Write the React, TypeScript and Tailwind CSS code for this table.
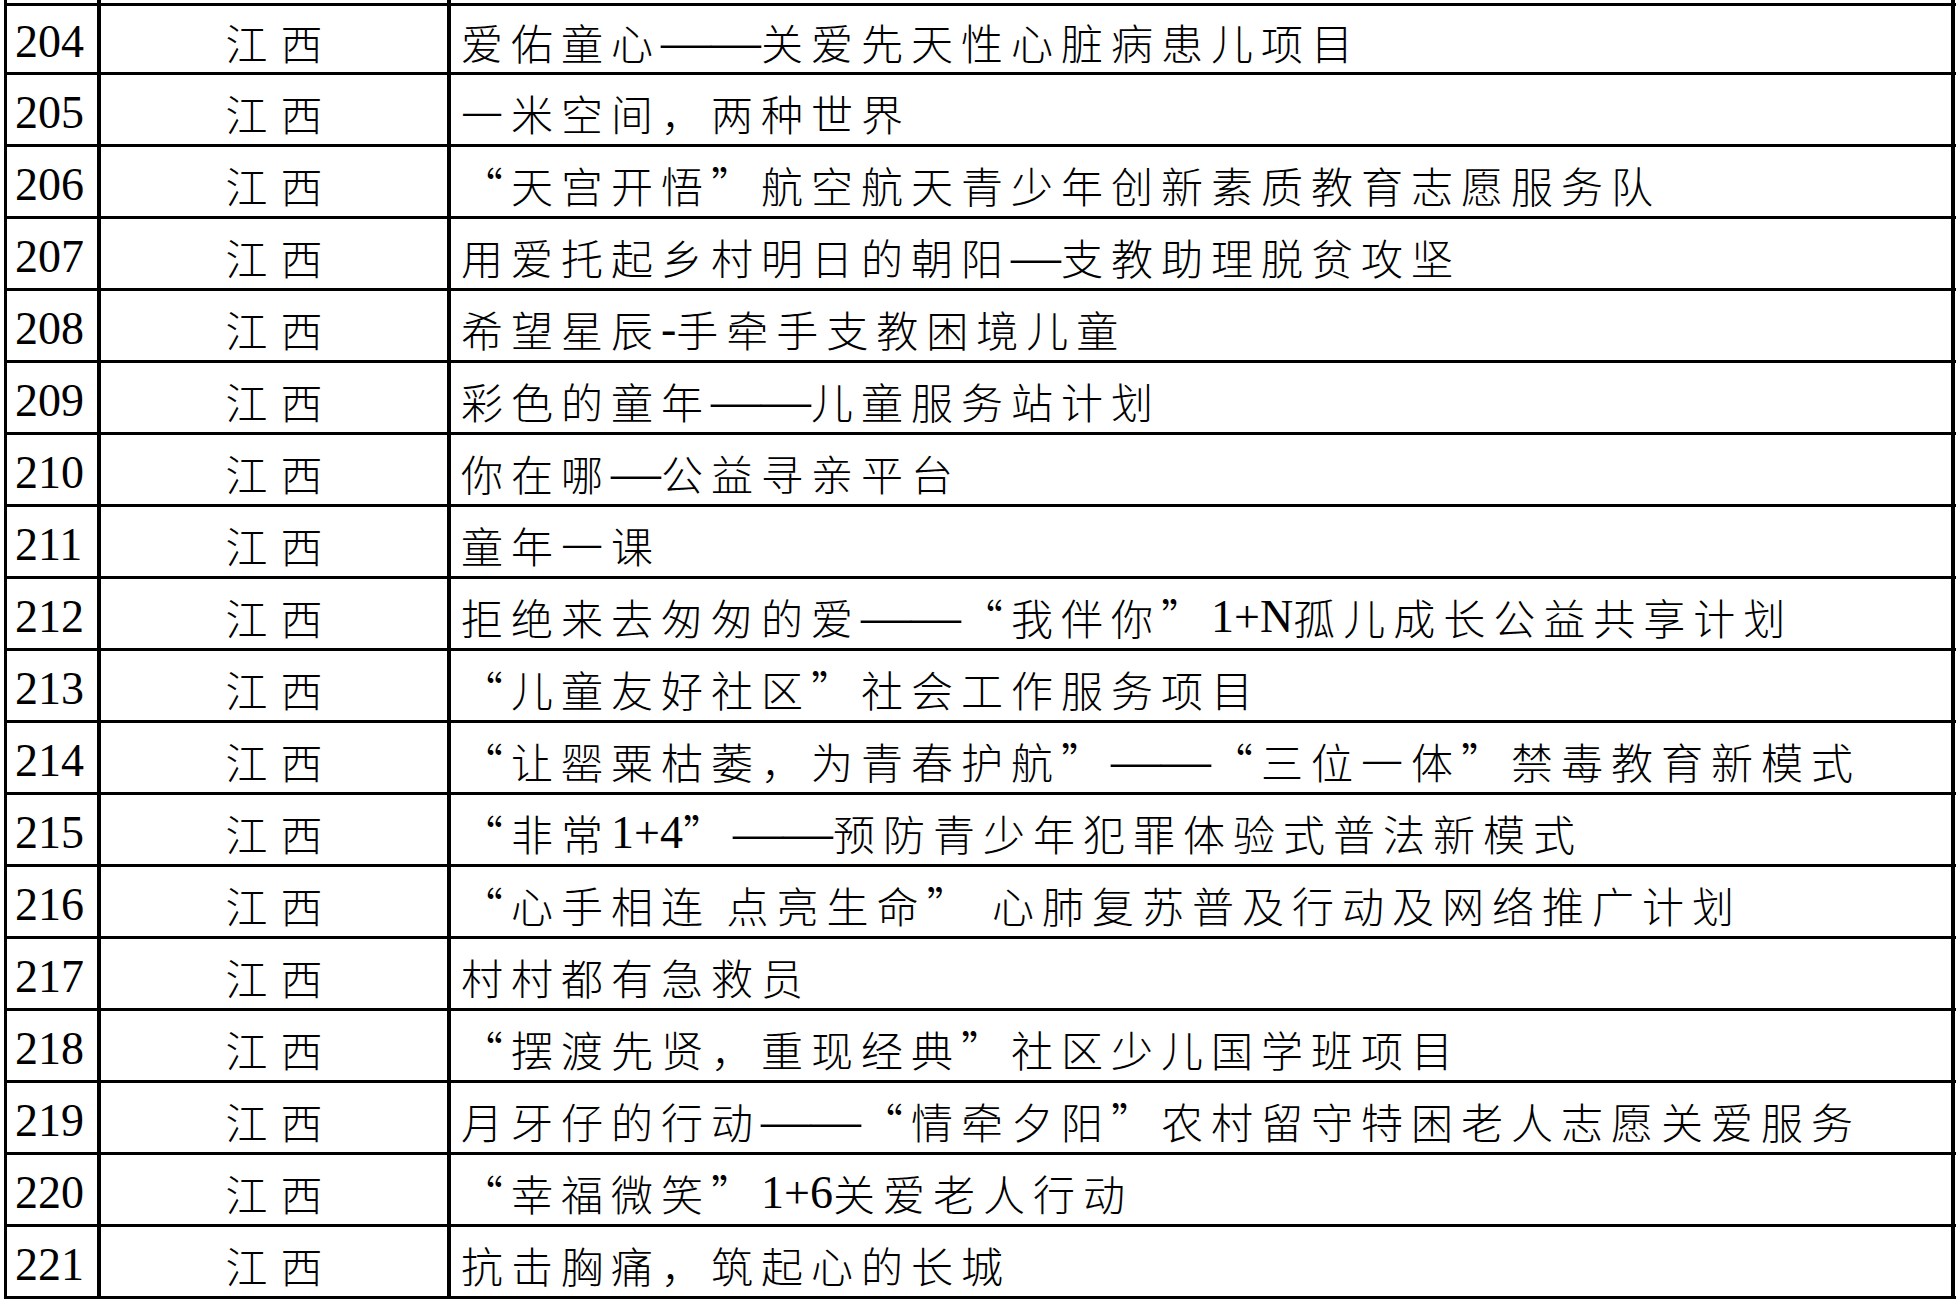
const ROWS: [number, string][] = [
  [204, '爱佑童心——关爱先天性心脏病患儿项目'],
  [205, '一米空间，两种世界'],
  [206, '“天宫开悟”航空航天青少年创新素质教育志愿服务队'],
  [207, '用爱托起乡村明日的朝阳—支教助理脱贫攻坚'],
  [208, '希望星辰-手牵手支教困境儿童'],
  [209, '彩色的童年——儿童服务站计划'],
  [210, '你在哪—公益寻亲平台'],
  [211, '童年一课'],
  [212, '拒绝来去匆匆的爱——“我伴你”1+N孤儿成长公益共享计划'],
  [213, '“儿童友好社区”社会工作服务项目'],
  [214, '“让罂粟枯萎，为青春护航”——“三位一体”禁毒教育新模式'],
  [215, '“非常1+4”——预防青少年犯罪体验式普法新模式'],
  [216, '“心手相连 点亮生命” 心肺复苏普及行动及网络推广计划'],
  [217, '村村都有急救员'],
  [218, '“摆渡先贤，重现经典”社区少儿国学班项目'],
  [219, '月牙仔的行动——“情牵夕阳”农村留守特困老人志愿关爱服务'],
  [220, '“幸福微笑”1+6关爱老人行动'],
  [221, '抗击胸痛，筑起心的长城'],
];

// latin runs and dashes are set in the serif face, the rest in the CJK face
function Mixed({ text }: { text: string }) {
  const parts = text.split(/( +|[\x21-\x7e]+|—+)/).filter((p) => p !== '');
  return (
    <>
      {parts.map((p, i) => {
        if (/^—+$/.test(p)) {
          return (
            <span key={i} className="font-['Liberation_Serif',serif] text-[50px] tracking-normal">
              {p}
            </span>
          );
        }
        if (/^ +$/.test(p)) {
          return (
            <span key={i} className="font-['Liberation_Serif',serif] text-[46px] tracking-[4px]">
              {p}
            </span>
          );
        }
        if (/^[\x21-\x7e]+$/.test(p)) {
          return (
            <span key={i} className="font-['Liberation_Serif',serif] text-[46px] tracking-normal">
              {p}
            </span>
          );
        }
        return <span key={i}>{p}</span>;
      })}
    </>
  );
}

function Row({ num, title, first }: { num: number; title: string; first?: boolean }) {
  return (
    <div className={`flex h-[72px] border-b-[3px] border-black ${first ? 'border-t-[3px]' : ''}`}>
      <div className="w-[97px] shrink-0 border-l-[3px] border-r-[4px] border-black flex items-center pl-[8px] pt-[6px]">
        <span className="font-['Liberation_Serif',serif] text-[46px] leading-none text-black">{num}</span>
      </div>
      <div className="w-[350px] shrink-0 border-r-[4px] border-black flex items-center justify-center gap-[13px] pt-[6px] text-[42px] leading-none font-light">
        <span>江</span>
        <span>西</span>
      </div>
      <div className="w-[1504px] shrink-0 border-r-[4px] border-black flex items-center pl-[10px] pt-[6px] text-[42px] leading-none font-light tracking-[8px] whitespace-pre">
        <Mixed text={title} />
      </div>
    </div>
  );
}

export default function App() {
  return (
    <div className="w-[1956px] h-[1303px] overflow-hidden bg-white text-black font-['Noto_Sans_CJK_SC',sans-serif] pl-[4px]">
      {/* tail of the row above */}
      <div className="flex h-[3px]">
        <div className="w-[97px] shrink-0 border-l-[3px] border-r-[4px] border-black" />
        <div className="w-[350px] shrink-0 border-r-[4px] border-black" />
        <div className="w-[1504px] shrink-0 border-r-[4px] border-black" />
      </div>
      {ROWS.map(([n, t], i) => (
        <Row key={n} num={n} title={t} first={i === 0} />
      ))}
    </div>
  );
}
